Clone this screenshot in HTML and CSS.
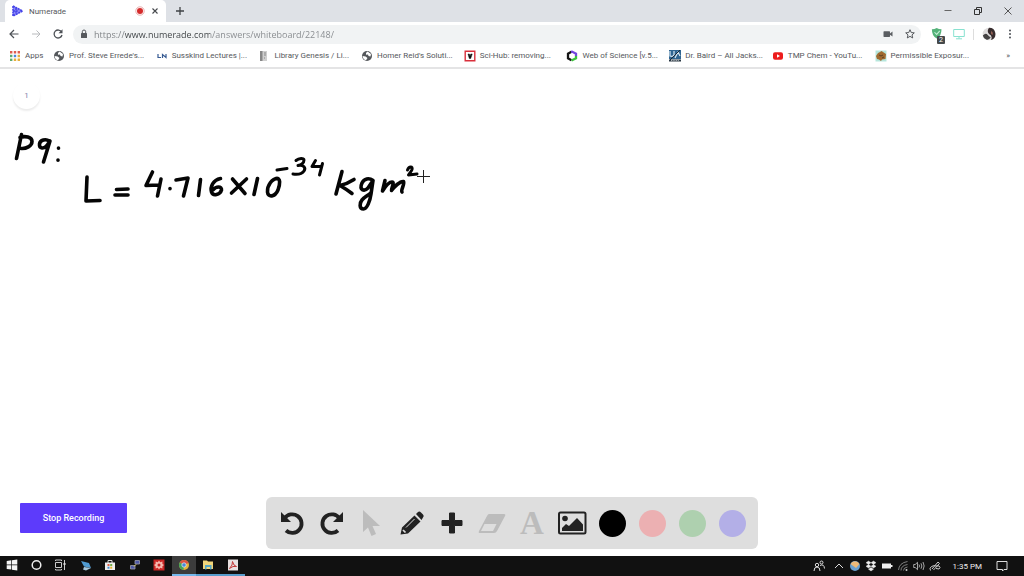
FILE: index.html
```html
<!DOCTYPE html>
<html lang="en">
<head>
<meta charset="utf-8">
<title>Numerade</title>
<link rel="stylesheet" href="styles.css">
</head>
<body>
<div class="desktop">
  <header class="browser">
    <div class="tabstrip">
      <div class="tab">
        <svg class="icon" viewBox="0 0 12 12"><path d="M1 0.8 11 6 1 11.2Z" fill="#8c8af8"/><path d="M1 1 10.5 6 1 11M1 1v10M1 6h5M4 3v6" fill="none" stroke="#4544e8" stroke-width="1.6" stroke-dasharray="2 .7"/></svg>
        <span class="tab-title">Numerade</span>
        <svg class="icon" viewBox="0 0 12 12"><circle cx="6" cy="6" r="4.2" fill="#fff" stroke="#e08a8a" stroke-width=".7"/><circle cx="6" cy="6" r="3" fill="#d52b2b"/></svg>
        <button class="plain" aria-label="Close tab"><svg class="icon" viewBox="0 0 12 12"><path d="M3.5 3.5l5 5M8.5 3.5l-5 5" stroke="#45484c" stroke-width="1.1"/></svg></button>
      </div>
      <button class="plain" aria-label="New tab"><svg class="icon" viewBox="0 0 12 12"><path d="M6 2v8M2 6h8" stroke="#3f4246" stroke-width="1.3"/></svg></button>
      <div class="window-controls">
        <button class="plain" aria-label="Minimize"><svg class="icon" viewBox="0 0 12 12"><path d="M2.5 5.500h7" stroke="#666"/></svg></button>
        <button class="plain" aria-label="Restore"><svg class="icon" viewBox="0 0 12 12"><path d="M2.5 4.5h5v5h-5zM4.5 4.5v-2h5v5h-2" fill="none" stroke="#333"/></svg></button>
        <button class="plain" aria-label="Close"><svg class="icon" viewBox="0 0 12 12"><path d="M2.5 2.5l7 7M9.500 2.500l-7 7" stroke="#555"/></svg></button>
      </div>
    </div>

    <div class="navbar">
      <div class="nav-buttons">
        <button class="plain" aria-label="Back"><svg class="icon" viewBox="0 0 12 12"><path d="M10.500 6h-8.500M6 2 2 6l4 4" fill="none" stroke="#4d5156" stroke-width="1.2"/></svg></button>
        <button class="plain" aria-label="Forward"><svg class="icon" viewBox="0 0 12 12"><path d="M2 6h8M6.500 2.500 10 6 6.500 9.500" fill="none" stroke="#b8babd"/></svg></button>
        <button class="plain" aria-label="Reload"><svg class="icon" viewBox="0 0 12 12"><path d="M9.600 4A4 4 0 1 0 10 7" fill="none" stroke="#4d5156" stroke-width="1.3"/><path d="M10.500 1.200v4H6.500z" fill="#4d5156"/></svg></button>
      </div>
      <div class="omnibox">
        <svg class="icon" viewBox="0 0 12 12"><rect x="3" y="5" width="6" height="5" rx=".6" fill="#55585c"/><path d="M4.300 5V3.700a1.700 1.700 0 0 1 3.400 0V5" fill="none" stroke="#55585c"/></svg>
        <input class="url" type="text" aria-label="Address" value="https://www.numerade.com/answers/whiteboard/22148/" spellcheck="false">
        <svg class="icon" viewBox="0 0 12 12"><rect x="1.500" y="3.300" width="6.500" height="5.600" rx=".6" fill="#5b5e62"/><path d="M8 5.500 10.500 3.500v5L8 6.800z" fill="#5b5e62"/></svg>
        <button class="plain" aria-label="Bookmark this page"><svg class="icon" viewBox="0 0 12 12"><path d="M6 1.700l1.250 2.850 3.050.3-2.300 2.050.7 3.050L6 8.350 3.300 9.950 4 6.900 1.700 4.850l3.050-.3z" fill="none" stroke="#55585c"/></svg></button>
      </div>
      <div class="extensions">
        <button class="plain" aria-label="Shield, 2 blocked"><svg class="icon ext" viewBox="0 0 16 16"><path d="M1 2.500q3 0 5.500-1.500Q9 2.500 12 2.500q0 8-5.500 10.500Q1 10.500 1 2.500z" fill="#55b27a"/><path d="M4 6l2.500 2.500L10 4.500" fill="none" stroke="#c8f0d8" stroke-width="1.200"/></svg><span class="badge">2</span></button>
        <button class="plain" aria-label="Screen extension"><svg class="icon" viewBox="0 0 12 12"><path d="M.7 1.500h10.600v7H.7zM3 10.800h6M6 8.500v2" fill="none" stroke="#88e2d0"/></svg></button>
        <span class="divider"></span>
        <button class="plain" aria-label="Profile"><svg class="icon avatar" viewBox="0 0 14 14"><circle cx="7" cy="7" r="6.300" fill="#dedcdc"/><path d="M7 .7a6.300 6.300 0 0 1 2 12.300Q11 9 7 7 4.500 4 7 .7z" fill="#372c2d"/><path d="M.8 8.500q3-3 5-.5t3 2q-2 4-5 2.300Q1.500 11.500 .8 8.500z" fill="#454343"/><path d="M9 4q2.500 1 1.500 4-2-1-1.500-4z" fill="#9a6558"/></svg></button>
        <button class="plain" aria-label="Menu"><svg class="icon" viewBox="0 0 12 12"><g fill="#4d5156"><circle cx="6" cy="2.500" r="1"/><circle cx="6" cy="6" r="1"/><circle cx="6" cy="9.500" r="1"/></g></svg></button>
      </div>
    </div>

    <nav class="bookmarks" aria-label="Bookmarks">
      <a class="bookmark apps" href="#"><svg class="icon" viewBox="0 0 12 12"><path fill="#df5c4e" d="M1 1h2.400v2.400H1zM4.800 1h2.400v2.400H4.800zM8.600 1H11v2.400H8.600z"/><path fill="#5cab6e" d="M1 4.800h2.400v2.400H1z"/><path fill="#4c87dc" d="M4.800 4.800h2.400v2.400H4.800z"/><path fill="#e6ae3c" d="M8.600 4.800H11v2.400H8.600zM4.800 8.600h2.400V11H4.800zM8.600 8.600H11V11H8.600z"/><path fill="#5cab6e" d="M1 8.600h2.400V11H1z"/></svg><span>Apps</span></a>
      <div class="bookmark-list">
        <a class="bookmark" href="#"><svg class="icon" viewBox="0 0 12 12"><circle cx="6" cy="6" r="5" fill="#55585c"/><path d="M6.500 1.600 10 4 9.500 6.500 7.500 6 7 4.500 5 4.800 5 3zM1.600 6l3 .5L6.500 8 5 10.300Q1.800 9.500 1.600 6z" fill="#fff"/></svg><span>Prof. Steve Errede's...</span></a>
        <a class="bookmark" href="#"><svg class="icon" viewBox="0 0 12 12"><path d="M2 4v3.500h3M6.500 8V4.500L10 7.500V4" fill="none" stroke="#375b93" stroke-width="1.200"/></svg><span>Susskind Lectures |...</span></a>
        <a class="bookmark" href="#"><svg class="icon" viewBox="0 0 12 12"><path d="M2 1h7v10H2z" fill="#d0d0d0"/><path d="M2 1h2.500v10H2z" fill="#888"/><path d="M6 3h2M6 5h2M6 8h1" stroke="#888"/></svg><span>Library Genesis / Li...</span></a>
        <a class="bookmark" href="#"><svg class="icon" viewBox="0 0 12 12"><circle cx="6" cy="6" r="5" fill="#55585c"/><path d="M6.500 1.600 10 4 9.500 6.500 7.500 6 7 4.500 5 4.800 5 3zM1.600 6l3 .5L6.500 8 5 10.300Q1.800 9.500 1.600 6z" fill="#fff"/></svg><span>Homer Reid's Soluti...</span></a>
        <a class="bookmark" href="#"><svg class="icon" viewBox="0 0 12 12"><path d="M1.200 1.200h9.600v9.600H1.200z" fill="#fff" stroke="#d9303c" stroke-width="1.400"/><path d="M4 4h1.400L6 6l.8-2h1.400L6.700 8.500H5.300z" fill="#111" stroke="#111" stroke-width=".5"/></svg><span>Sci-Hub: removing...</span></a>
        <a class="bookmark" href="#"><svg class="icon" viewBox="0 0 12 12"><g fill="none" stroke-width="2.300"><path d="M5.500 1.800 2 3.700v4.600l3.500 2" stroke="#151515"/><path d="M5 1.800 6 1.600 10 3.800V6" stroke="#7346dd"/><path d="M10 6v2.300l-4.500 2.200" stroke="#3cc33c"/></g></svg><span>Web of Science [v.5...</span></a>
        <a class="bookmark" href="#"><svg class="icon" viewBox="0 0 12 12"><path d="M0 0h12v9H0z" fill="#2f6591"/><path d="M1 1v5q3 1 4-1V1M6 8l3-6 2 4" fill="none" stroke="#d8e8f4" stroke-width="1.200"/><path d="M0 11 11 0" stroke="#1a2733"/><path d="M0 10.500h12" stroke="#293743" stroke-width="2"/><path d="M2 10.500h8" stroke="#fff" stroke-width=".6" stroke-dasharray="1 .7"/></svg><span>Dr. Baird – All Jacks...</span></a>
        <a class="bookmark" href="#"><svg class="icon" viewBox="0 0 12 12"><rect x="1" y="2.200" width="10" height="7.600" rx="2" fill="#ed1c1c"/><path d="M5 4.200 8 6 5 7.800z" fill="#fff"/></svg><span>TMP Chem - YouTu...</span></a>
        <a class="bookmark" href="#"><svg class="icon" viewBox="0 0 12 12"><path d="M.5.5h11v11H.5z" fill="#b6e6dc"/><path d="M1 6 3 3l2-1 1.500-1L8 2l3 2-.5 5L7 9.500 6 11 4 9.500 2 9z" fill="#a06b31"/><path d="M4 5l2 1 2-1M7 8l2-1" stroke="#5c4224" fill="none"/></svg><span>Permissible Exposur...</span></a>
      </div>
      <button class="plain more" aria-label="More bookmarks">»</button>
    </nav>
  </header>

  <main class="board">
    <button class="page-number">1</button>
    <svg class="ink" viewBox="0 69 440 160" role="img" aria-label="pq: L = 4.716 × 10 to the power −34 kg m squared">
      <g class="pen">
        <path d="M21.500 134.500 16.500 158.500M20 137.500C25 135.500 32 137 32 141.500 32 146 26 149 21 148.500"/>
        <path d="M49 141C46 138.500 40 140 39.500 144 39 149 44 149 47 145.500L50 141 43.500 162"/>
        <path d="M58.500 148v.3M58 160v.3"/>
        <path d="M87 177 86 201 100 200.500"/>
        <path d="M116.500 189.500 128 189M115 195 128 195"/>
        <path d="M152.500 172 146 185.500 159 185M161 179 157.500 196"/>
        <path d="M170 188.500v.3"/>
        <path d="M176 180 188 178 183.500 196"/>
        <path d="M200.500 179.500 198.500 195.500"/>
        <path d="M220.500 178.500C213 180 210 187 211.500 192 213 196.500 220 195 221.500 190 222 186 216 186 213 190"/>
        <path d="M232.500 179 245 193.500M246.500 179 231.500 193"/>
        <path d="M257.500 178.500 254 194.500"/>
        <path d="M278 178.500C272 178 267 186 267.500 192 268 198 275 197 278 190 280 184 281 178 276 178.500"/>
      </g>
      <g class="pen fine">
        <path d="M277 170 287 168.500"/>
        <path d="M296 160.500C299 158 304 158 304 160 304 163 301 165 298 165.500 304 164.500 306 168 304 171 302 174 297 174.500 293 174"/>
        <path d="M315.500 160.500 312 166.500 320.500 166.500M322.500 163.500 319.500 175"/>
        <path d="M407.500 170C409 166 413 166 412 169.500 411 172 409 174 408.500 175L417 174"/>
      </g>
      <g class="pen">
        <path d="M342 171.500 336 194M354 179.500Q347 184 340 185.500 346 189 352 193.500"/>
        <path d="M373 180.500C369 177.500 364 178.500 362 183 359 190 364 192 368 188L373 180.500 371 194C370 201 367 209 363.500 209 359 209 359.500 203 362 200 364 197 369 195 371 192.500"/>
        <path d="M385 180.500 382.500 191C385 187 389 182 392 182 395 182 391 189 391.500 190.500 394 187 400 181 403.500 181.500 405 184 400.500 190 402 192"/>
      </g>
      <path class="crosshair" d="M423.500 170v13M417 176.500h13"/>
    </svg>

    <div class="board-footer">
      <button class="stop">Stop Recording</button>
      <div class="tools" role="toolbar" aria-label="Drawing tools">
        <button class="tool" aria-label="Undo"><svg viewBox="0 0 26 26"><path d="M5.500 8.500A9.300 9.300 0 1 1 7 20.500" fill="none" stroke="#222" stroke-width="3.800"/><path d="M2 2v10h10z" fill="#222"/></svg></button>
        <button class="tool" aria-label="Redo"><svg viewBox="0 0 26 26"><path d="M20.500 8.500A9.300 9.300 0 1 0 19 20.500" fill="none" stroke="#222" stroke-width="3.800"/><path d="M24 2v10h-10z" fill="#222"/></svg></button>
        <button class="tool" aria-label="Select"><svg viewBox="0 0 26 26"><path d="M4 0v22l5-4.500 3.500 8.500 4.500-2-3.500-8h7.500z" fill="#bcbcbc"/></svg></button>
        <button class="tool" aria-label="Pen"><svg viewBox="0 0 26 26"><path d="M15.500 5.500l6 6L9 23.500l-7.500 1 1.500-7zM17 4l2-2q1.500-1 3 .5l2 2q1.500 1.500 0 3L22.500 10z" fill="#222"/><path d="M15.500 9 7 17.500" stroke="#ddd"/><path d="M4 20 6.500 22.500" stroke="#ddd" stroke-width="1.700"/></svg></button>
        <button class="tool" aria-label="Add"><svg viewBox="0 0 26 26"><path d="M13 4v18M4 13h18" stroke="#222" stroke-width="4"/><path d="M10.500 3h5v7.500H23v5h-7.500V23h-5v-7.500H3v-5h7.500z" fill="#222" stroke="#222" stroke-linejoin="round"/></svg></button>
        <button class="tool" aria-label="Eraser"><svg class="wide" viewBox="0 0 30 26"><path d="M12 4H27q2 0 1 2L20 21q-1 2-3 2H3q-2 0-1-2L10 6q1-2 2-2z" fill="#bcbcbc"/><path d="M7.500 14h12l-3.500 7H4z" fill="#dedede"/></svg></button>
        <button class="tool letter" aria-label="Text">A</button>
        <button class="tool" aria-label="Image"><svg class="wide" viewBox="0 0 30 26"><rect x="2" y="2.500" width="26.500" height="21" rx="1.500" fill="none" stroke="#222" stroke-width="2"/><circle cx="8" cy="8.500" r="2.800" fill="#222"/><path d="M5 21v-3l4-4 3 2 8-8 6 6.500V21z" fill="#222"/></svg></button>
        <button class="tool" aria-label="Black"><span class="swatch black"></span></button>
        <button class="tool" aria-label="Red"><span class="swatch red"></span></button>
        <button class="tool" aria-label="Green"><span class="swatch green"></span></button>
        <button class="tool" aria-label="Blue"><span class="swatch blue"></span></button>
      </div>
    </div>
  </main>

  <footer class="taskbar">
    <div class="pinned">
      <button class="task" aria-label="Start"><svg class="icon" viewBox="0 0 12 12"><path d="M.7 2 5.300 1.300v4.300H.7zM6 1.200 11.300.5v5.100H6zM.7 6.300h4.600v4.300L.7 10zM6 6.300h5.300v5.100L6 10.700z" fill="#f4f4f4"/></svg></button>
      <button class="task" aria-label="Cortana"><svg class="icon" viewBox="0 0 12 12"><circle cx="5.500" cy="6" r="4.300" fill="none" stroke="#eee" stroke-width="1.500"/></svg></button>
      <button class="task" aria-label="Task view"><svg class="icon" viewBox="0 0 12 12"><path d="M.5 3.500h6v5h-6zM.5 2V1h6v1M.5 10v1h6v-1M9.500 1v3M9.500 6v5" fill="none" stroke="#ccc"/><path d="M8.500 4h2v2h-2z" fill="#ddd"/></svg></button>
      <button class="task" aria-label="Remote desktop"><svg class="icon" viewBox="0 0 12 12"><path d="M1 2l8 2 2 5-7-1.500z" fill="#4f9bd2"/><path d="M4 8l7 1-5 2.500-3-1z" fill="#a6c7dc"/></svg></button>
      <button class="task" aria-label="Store"><svg class="icon" viewBox="0 0 12 12"><path d="M4 4V1.500h4V4" fill="none" stroke="#ddd"/><path d="M1 3.500h10V11H1z" fill="#eee"/><path d="M3.500 5h2v2h-2z" fill="#df6045"/><path d="M6.200 5h2v2h-2z" fill="#70ad45"/><path d="M3.500 7.700h2v2h-2z" fill="#468bce"/><path d="M6.200 7.700h2v2h-2z" fill="#e5b331"/></svg></button>
      <button class="task" aria-label="Terminal"><svg class="icon" viewBox="0 0 12 12"><path d="M6 1.500h4.500v3.500H6zM1.500 6.500H6V10H1.500z" fill="#4e58a8" stroke="#9a9dac" stroke-width=".8"/><path d="M7 5.500 5 7.500" stroke="#e9d55b"/></svg></button>
      <button class="task" aria-label="Mathematica"><svg class="icon" viewBox="0 0 12 12"><path d="M.5.5h11v11H.5z" fill="#ca2524"/><path d="M6 1.500l1.200 1.700 2.200-.6v2.300L11 6 9.400 7.200v2.200l-2.200-.6L6 10.500 4.800 8.800l-2.200.6V7.200L1 6l1.600-1.100V2.600l2.200.6z" fill="#f5b8ae"/><circle cx="6" cy="6" r="1.500" fill="#ca2524"/></svg></button>
      <button class="task active" aria-label="Chrome"><svg class="icon" viewBox="0 0 12 12"><circle cx="6" cy="6" r="5" fill="#e4b43b"/><path d="M6 6 1.700 3.500A5 5 0 0 1 10.600 4z" fill="#dc5142"/><path d="M6 6 1.700 3.500A5 5 0 0 0 5.500 11z" fill="#43a25b"/><circle cx="6" cy="6" r="2.200" fill="#4788da" stroke="#eee" stroke-width=".7"/></svg></button>
      <button class="task open" aria-label="File Explorer"><svg class="icon" viewBox="0 0 12 12"><path d="M1 1.500h4l1 1h5V10H1z" fill="#f1d57a"/><path d="M3 6h6.500v4.500H8V8H4.500v2.500H3z" fill="#55a6c5"/></svg></button>
      <button class="task open" aria-label="Acrobat"><svg class="icon" viewBox="0 0 12 12"><path d="M1 .5h10v11H1z" fill="#e8e0e0"/><path d="M2.500 9.500Q6 6 5.500 2.500 6.500 7 9.500 7.500 6 6.500 2.500 9.500z" fill="none" stroke="#c43a3a"/></svg></button>
    </div>
    <div class="tray">
      <button class="plain people" aria-label="People"><svg class="icon" viewBox="0 0 12 12"><g fill="none" stroke="#ddd"><circle cx="4" cy="5" r="1.700"/><path d="M1 11q0-4 3-4t3 4"/><circle cx="8.500" cy="2.500" r="1.500"/><path d="M7 5.500q4-2 4.500 3"/></g></svg></button>
      <button class="plain" aria-label="Show hidden icons"><svg class="icon" viewBox="0 0 12 12"><path d="M2 8l4-4 4 4" fill="none" stroke="#ddd"/></svg></button>
      <svg class="icon" viewBox="0 0 12 12"><circle cx="6" cy="6" r="5" fill="#6aa0d0"/><path d="M1.500 4a5 5 0 0 1 9 0L7 8z" fill="#edb978"/></svg>
      <svg class="icon" viewBox="0 0 12 12"><path d="M3.500 1 6 2.700 3.500 4.500 1 2.700zM8.500 1 11 2.700 8.500 4.500 6 2.700zM3.500 4.500 6 6.300 3.500 8 1 6.300zM8.500 4.500 11 6.300 8.500 8 6 6.300zM6 7.500l2.500 1.700L6 11 3.500 9.200z" fill="#eee" stroke="#eee" stroke-width=".4"/></svg>
      <svg class="icon" viewBox="0 0 12 12"><path d="M1 3.500h9v5H1zM10 5h1.500v2H10z" fill="#eee"/></svg>
      <svg class="icon" viewBox="0 0 12 12"><g fill="none" stroke="#999" stroke-width=".8"><path d="M1.500 10Q2 3 10.500 1.500M4 10.500q0-5 6.500-6M6.500 10.500q0-3 4-3.500"/></g><circle cx="9.500" cy="10" r="1" fill="#ccc"/></svg>
      <svg class="icon" viewBox="0 0 12 12"><path d="M.7 4.500h1.500L4.500 2.300v7.400L2.200 7.500H.7z" fill="none" stroke="#ccc" stroke-width=".8"/><path d="M6 4.500q1 1.500 0 3M8 3.300q1.700 2.700 0 5.400M10 2q2.300 4 0 8" fill="none" stroke="#ccc" stroke-width=".8"/></svg>
      <svg class="icon" viewBox="0 0 12 12"><path d="M3 9 9 2l1.500 1.500-6 6.500M1.500 10.500Q0 8 2.500 6.500T7 6q4-1 4 1.500t-4 1" fill="none" stroke="#ccc"/></svg>
      <time class="clock">1:35 PM</time>
      <button class="plain" aria-label="Notifications"><svg class="icon" viewBox="0 0 12 12"><path d="M1 1.500h10v8H8L6.500 11v-1.500H1z" fill="none" stroke="#ddd"/></svg></button>
    </div>
  </footer>
</div>
</body>
</html>
```

FILE: styles.css
```css
* { box-sizing: border-box; }

body {
  margin: 0;
  font-family: Roboto, "Noto Sans", sans-serif;
  font-size: 8px;
  color: #55585c;
}

button, input { font: inherit; color: inherit; }

.desktop {
  display: flex;
  flex-direction: column;
  min-height: 100vh;
  background: #fff;
}

.plain {
  position: relative;
  display: flex;
  padding: 0;
  border: 0;
  background: none;
}

.icon { display: block; flex: none; width: 12px; height: 12px; }

/* Browser chrome */
.browser { border-bottom: 2px solid #e4e4e5; }

.tabstrip {
  display: flex;
  align-items: center;
  gap: 8px;
  height: 22px;
  padding: 0 10px 0 5px;
  background: #dee1e6;
}

.tab {
  display: flex;
  align-items: center;
  gap: 3px;
  width: 161px;
  height: 22px;
  padding: 0 5px 0 7px;
  border-radius: 5px 5px 0 0;
  background: #fff;
}

.tab-title { flex: 1; padding-left: 2px; }

.window-controls { display: flex; gap: 18px; margin-left: auto; }

.navbar { display: flex; align-items: center; height: 24px; padding: 0 8px; }

.nav-buttons { display: flex; gap: 10px; width: 65px; }

.omnibox {
  display: flex;
  flex: 1;
  align-items: center;
  gap: 10px;
  height: 19px;
  padding: 0 5px;
  border-radius: 10px;
  background: #f1f3f4;
}

.url {
  flex: 1;
  min-width: 0;
  margin-left: -6px;
  padding: 0;
  border: 0;
  outline: 0;
  background: linear-gradient(90deg, #7b7e82 31px, #3c4043 31px 116px, #85888c 116px);
  background-clip: text;
  color: transparent;
  font-family: "Open Sans", "Noto Sans", sans-serif;
  font-size: 9px;
}

.extensions {
  display: flex;
  align-items: center;
  gap: 8px;
  padding-left: 10px;
}

.ext { width: 14px; height: 14px; }

.badge {
  position: absolute;
  right: 0;
  bottom: -3px;
  width: 8px;
  height: 8px;
  border-radius: 1px;
  background: #45494b;
  color: #fff;
  font-size: 7px;
  line-height: 8px;
}

.divider { width: 1px; height: 11px; background: #ddd; }
.avatar { width: 14px; height: 14px; }

.bookmarks { display: flex; align-items: center; height: 21px; padding: 0 14px 2px 9px; }

.bookmark {
  display: flex;
  align-items: center;
  gap: 4px;
  color: inherit;
  text-decoration: none;
  white-space: nowrap;
}

.apps { width: 44px; }

.bookmark-list {
  display: grid;
  flex: 1;
  grid-template-columns: repeat(9, 1fr);
  margin-right: 29px;
}

/* Whiteboard */
.board { display: flex; flex: 1; flex-direction: column; position: relative; }

.page-number {
  position: absolute;
  top: 13px;
  left: 13px;
  width: 27px;
  height: 27px;
  padding: 0;
  border: 0;
  border-radius: 50%;
  background: #fff;
  box-shadow: 0 2px 2px #ececec;
  color: #8584ac;
}

.ink { width: 440px; height: 160px; }

.pen {
  fill: none;
  stroke: #050505;
  stroke-width: 3.6px;
  stroke-linecap: round;
  stroke-linejoin: round;
}

.fine { stroke-width: 3px; }
.crosshair { fill: none; stroke: #222; stroke-width: 1px; }

.board-footer {
  display: grid;
  grid-template-columns: 1fr auto 1fr;
  align-items: start;
  margin-top: auto;
  padding-bottom: 7px;
}

.stop {
  justify-self: start;
  width: 107px;
  height: 30px;
  margin: 6px 0 0 20px;
  padding: 0;
  border: 0;
  border-radius: 1px;
  background: #5d3bfb;
  color: #fff;
  font-size: 9px;
  font-weight: 500;
}

.tools {
  display: flex;
  height: 52px;
  padding: 0 6px;
  border-radius: 6px;
  background: #dedede;
}

.tool {
  display: flex;
  align-items: center;
  justify-content: center;
  width: 40px;
  padding: 0;
  border: 0;
  background: none;
}

.tool svg { width: 26px; height: 26px; }
.tool .wide { width: 30px; }

.letter {
  color: #bcbcbc;
  font-family: "Liberation Serif", serif;
  font-size: 33px;
  font-weight: bold;
}

.swatch { width: 27px; height: 27px; border-radius: 50%; }
.black { background: #000; }
.red { background: #ecb0b2; }
.green { background: #aed0af; }
.blue { background: #b3afe7; }

/* Taskbar */
.taskbar {
  display: flex;
  justify-content: space-between;
  height: 20px;
  background: #111;
  color: #eee;
}

.pinned { display: grid; grid-template-columns: repeat(10, 1fr); width: 245px; }

.task {
  display: flex;
  align-items: center;
  justify-content: center;
  padding: 0;
  border: 0;
  border-bottom: 2px solid transparent;
  background: none;
}

.open { border-color: #579ccb; }
.active { border-color: #76b9ed; background: #3c3c3c; }

.tray { display: flex; align-items: center; gap: 4px; padding-right: 16px; }
.people { margin-right: 4px; }
.clock { margin: 0 10px 0 8px; white-space: nowrap; }
```
